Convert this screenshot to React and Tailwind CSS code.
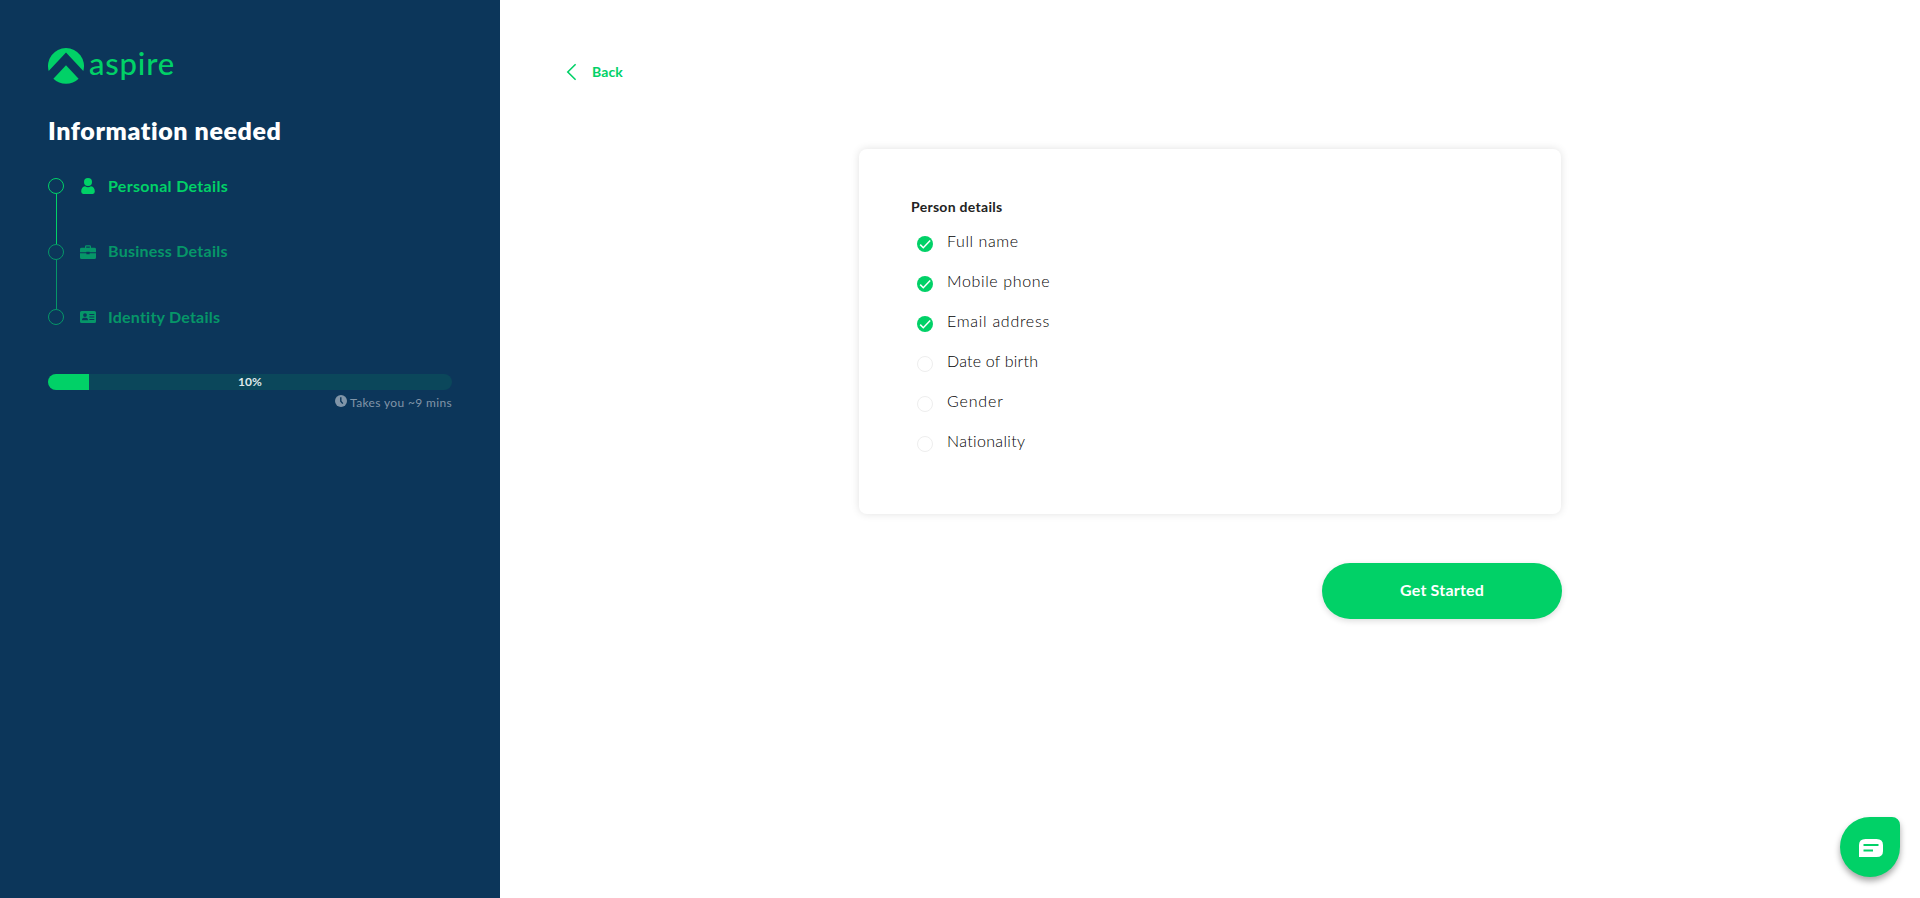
import React from "react";

const STEPS = [
  { label: "Personal Details", icon: "user", active: true, text: "tracking-[0.32px]" },
  { label: "Business Details", icon: "briefcase", active: false, text: "-mt-px tracking-[0.25px]" },
  { label: "Identity Details", icon: "idCard", active: false, text: "tracking-[0.22px]" },
];

const FIELDS = [
  { label: "Full name", done: true, tracking: "tracking-[0.6px]" },
  { label: "Mobile phone", done: true, tracking: "tracking-[0.65px]" },
  { label: "Email address", done: true, tracking: "tracking-[0.72px]" },
  { label: "Date of birth", done: false, tracking: "tracking-[0.22px]" },
  { label: "Gender", done: false, tracking: "tracking-[0.85px]" },
  { label: "Nationality", done: false, tracking: "tracking-[0.35px]" },
];

function Logo() {
  return (
    <div className="flex h-9 items-center">
      <svg width="36" height="36" viewBox="0 0 36 36" fill="#01d167">
        <path d="M0.7 23A18 18 0 1 1 35.3 23L18 4.5Z" />
        <path d="M18 17.3L30.6 30.7A18 18 0 0 1 5.4 30.7Z" />
      </svg>
      <span className="ml-[5px] -mt-[7px] text-[31px] leading-9 font-medium tracking-[0.8px] text-[#01d167]">aspire</span>
    </div>
  );
}

function StepIcon({ name }) {
  if (name === "user")
    return (
      <svg width="16" height="16" viewBox="0 0 16 16" fill="currentColor">
        <circle cx="8" cy="4" r="4" />
        <path d="M5 8.3Q8 10.2 11 8.3Q14.8 9 14.8 13.6Q14.8 16 12.8 16H3.2Q1.2 16 1.2 13.6Q1.2 9 5 8.3Z" />
      </svg>
    );
  if (name === "briefcase")
    return (
      <svg width="16" height="16" viewBox="0 0 16 16" fill="currentColor">
        <path
          fillRule="evenodd"
          d="M5 3.8V2.6Q5 1.3 6.3 1.3H9.7Q11 1.3 11 2.6V3.8H14.5Q16 3.8 16 5.2V8.3H9.6V7.7H6.4V8.3H0V5.2Q0 3.8 1.5 3.8ZM6.2 3.8H9.8V2.5H6.2Z"
        />
        <path d="M0 9.2H6.4V10.2H9.6V9.2H16V13.5Q16 15 14.5 15H1.5Q0 15 0 13.5Z" />
      </svg>
    );
  return (
    <svg width="16" height="16" viewBox="0 0 16 16" fill="currentColor">
      <path
        fillRule="evenodd"
        d="M1.5 2H14.5Q16 2 16 3.5V12.5Q16 14 14.5 14H1.5Q0 14 0 12.5V3.5Q0 2 1.5 2ZM5 4.2A1.9 1.9 0 0 0 5 8A1.9 1.9 0 0 0 5 4.2ZM1.9 11.3H8.1Q8.1 8.8 6.3 8.8H3.7Q1.9 8.8 1.9 11.3ZM9.3 5V6H14.3V5ZM9.3 7.5V8.5H14.3V7.5ZM9.3 10V11H14.3V10Z"
      />
    </svg>
  );
}

function Steps() {
  return (
    <ol className="mt-[32px] flex flex-col">
      {STEPS.map((s, i) => (
        <li key={s.label} className={s.active ? "flex text-[#01d167]" : "flex text-[#069668]"}>
          <div className="flex w-4 flex-col items-center">
            <span className="h-4 w-4 shrink-0 rounded-full border border-current" />
            {i < STEPS.length - 1 && (
              <span className={i === 0 ? "h-[50px] w-px bg-current" : "h-[49px] w-px bg-current"} />
            )}
          </div>
          <span className="ml-4 h-4">
            <StepIcon name={s.icon} />
          </span>
          <span className={`ml-3 h-4 text-base leading-4 font-bold ${s.text}`}>{s.label}</span>
        </li>
      ))}
    </ol>
  );
}

function Sidebar() {
  return (
    <aside className="flex w-[500px] shrink-0 flex-col bg-[#0c365a] px-12 pt-12">
      <Logo />
      <h1 className="mt-[30px] text-[25px] leading-8 font-extrabold tracking-[0.6px] whitespace-nowrap text-white">
        Information needed
      </h1>
      <Steps />
      <div className="mt-[49px] flex h-4 w-[404px] overflow-hidden rounded-full bg-[#0b475b]">
        <div className="w-[41px] bg-[#01d167]" />
        <div className="-ml-[41px] flex-1 text-center text-xs leading-4 font-bold text-[#dfe8ea]">10%</div>
      </div>
      <div className="mt-[5px] flex h-4 w-[404px] justify-end text-[#8195a8]">
        <svg width="12" height="12" viewBox="0 0 12 12">
          <circle cx="6" cy="6" r="6" fill="currentColor" />
          <path d="M5.8 2.3V6.2L7.8 8.6" fill="none" stroke="#0c365a" strokeWidth="1.4" />
        </svg>
        <span className="ml-[3px] text-xs leading-4 tracking-[0.35px]">Takes you ~9 mins</span>
      </div>
    </aside>
  );
}

function FieldMark({ done }) {
  if (!done) return <span className="h-4 w-4 rounded-full border border-[#eeeeee]" />;
  return (
    <svg width="16" height="16" viewBox="0 0 16 16">
      <circle cx="8" cy="8" r="8" fill="#01d167" />
      <path d="M3.2 8.6L6.3 11.7L13.2 4.6" fill="none" stroke="white" strokeWidth="1.5" />
    </svg>
  );
}

function DetailsCard() {
  return (
    <section className="h-[365px] w-[702px] self-center rounded-lg bg-white px-[52px] pt-[48px] shadow-[0_0_8px_rgba(0,0,0,0.12)]">
      <h2 className="text-sm leading-5 font-bold tracking-[0.3px] text-[#222222]">Person details</h2>
      <ul className="mt-[14px] flex flex-col pl-[6px]">
        {FIELDS.map((f) => (
          <li key={f.label} className="flex h-10">
            <span className="mt-[5px] flex h-4 w-4">
              <FieldMark done={f.done} />
            </span>
            <span className={`ml-[14px] text-base leading-5 font-light text-black ${f.tracking}`}>{f.label}</span>
          </li>
        ))}
      </ul>
    </section>
  );
}

export default function App() {
  return (
    <div className="flex h-[898px] w-full overflow-hidden bg-white font-['Lato','Open_Sans',sans-serif]">
      <Sidebar />
      <main className="flex flex-1 flex-col pt-[62px]">
        <button className="ml-[66px] flex h-5 w-fit items-center text-[#01d167]">
          <svg width="11" height="18" viewBox="0 0 11 18" fill="none" stroke="currentColor" strokeWidth="1.6">
            <path d="M9.6 1.3L1.8 9L9.6 16.7" />
          </svg>
          <span className="ml-[15px] text-sm leading-5 font-bold tracking-[0.1px]">Back</span>
        </button>
        <div className="mt-[67px] ml-[358px] flex w-[704px] flex-col">
          <DetailsCard />
          <button className="mt-[49px] h-14 w-[240px] self-end rounded-full bg-[#01d167] pb-0.5 text-base font-bold tracking-[0.2px] text-white shadow-[0_2px_6px_rgba(0,0,0,0.14)]">
            Get Started
          </button>
        </div>
      </main>
      <button className="absolute top-[817px] left-[1840px] flex h-[60px] w-[60px] items-center justify-center rounded-[30px_8px_30px_30px] bg-[#01d167] shadow-[0_4px_6px_rgba(0,0,0,0.35)]">
        <svg width="24" height="18" viewBox="0 0 24 18" className="translate-x-[1px] translate-y-[1px]">
          <path d="M6.5 0H17.5Q24 0 24 6V12Q24 18 17.5 18H0V6Q0 0 6.5 0Z" fill="white" />
          <path d="M4.5 6H19.5M4.5 11.5H14" stroke="#01d167" strokeWidth="2" />
        </svg>
      </button>
    </div>
  );
}
